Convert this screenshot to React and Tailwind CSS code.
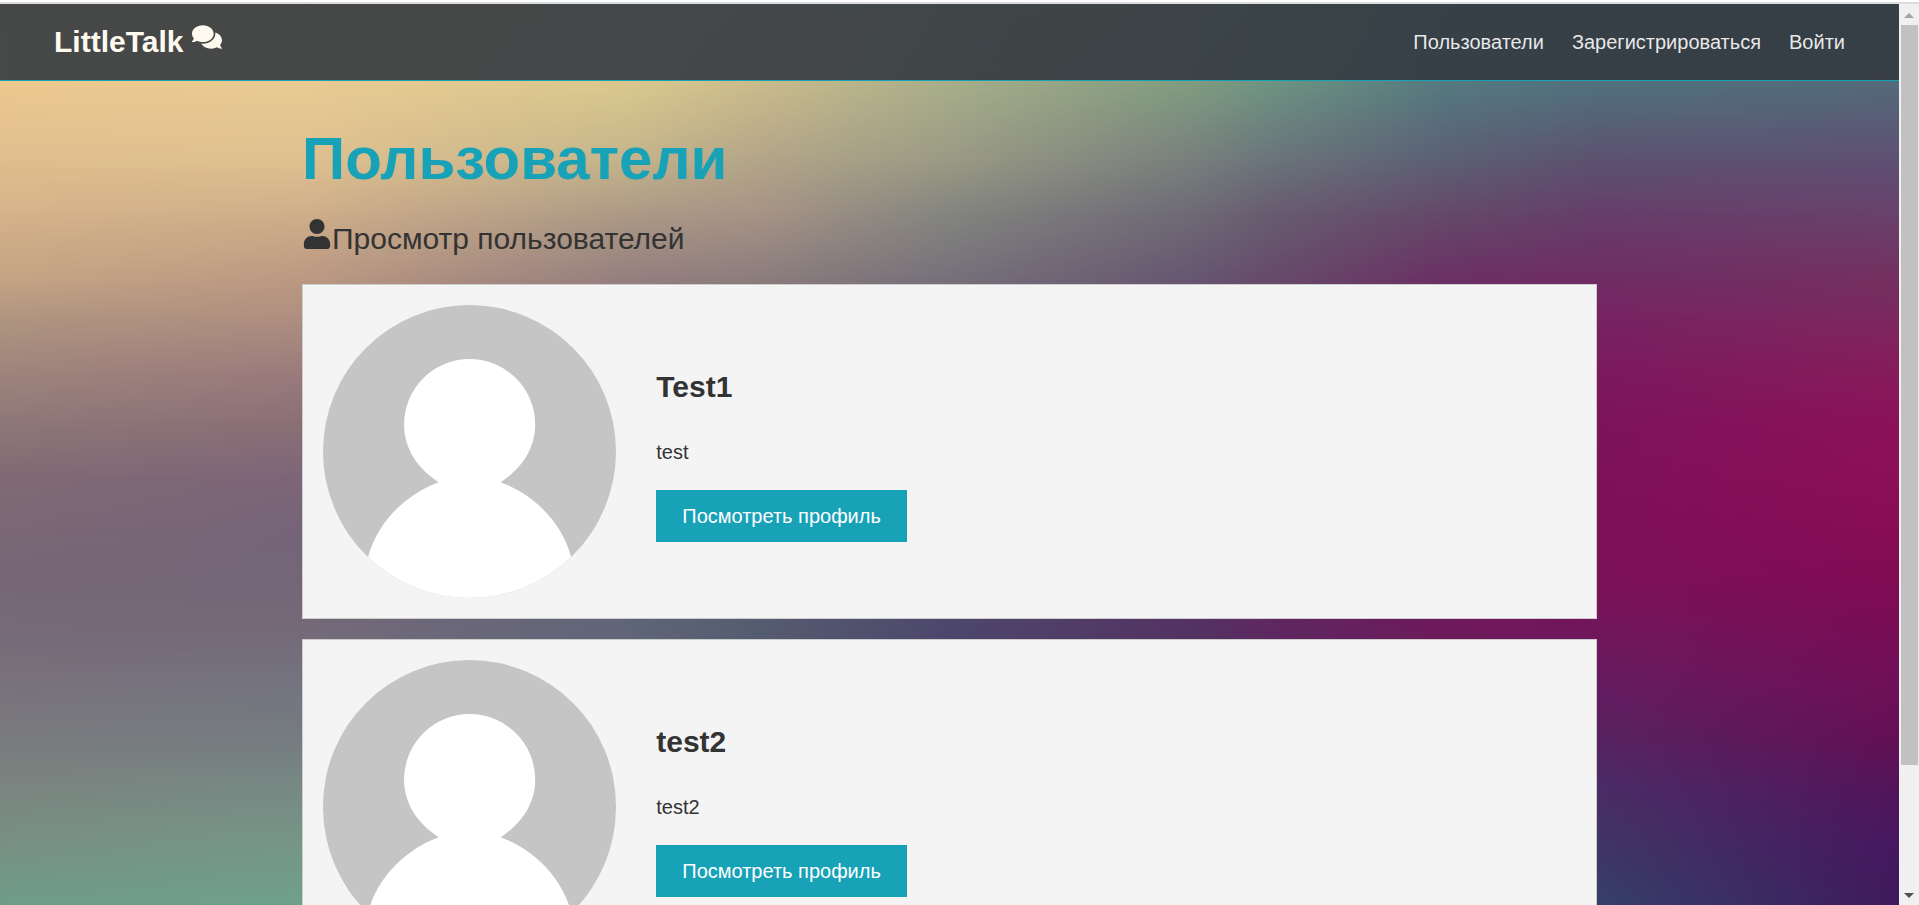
import { FaComments, FaUser } from "react-icons/fa";

const WIDE = [0, 16, 33, 40, 50, 63, 67, 76, 84, 100];
const EDGES = [0, 16, 84, 100];

const BACKDROP = [
  { y: 0, at: WIDE, colors: ["#edc98f", "#ecce94", "#e0cc90", "#d4c48e", "#b0b68c", "#84a484", "#749c86", "#588084", "#527882", "#527480"] },
  { y: 8.5, at: WIDE, colors: ["#edc98f", "#e9cb92", "#dac98e", "#cbbc8c", "#a8ae8a", "#7f9c80", "#6e9482", "#557a80", "#51727e", "#536b7a"] },
  { y: 17.3, at: WIDE, colors: ["#e0be8e", "#dfc090", "#c4b48b", "#b3a588", "#9a9a84", "#777f7c", "#6a747b", "#5c6074", "#5c5270", "#5e5073"] },
  { y: 23.1, at: WIDE, colors: ["#d6b38a", "#cfaf8a", "#ad9a86", "#a79486", "#84857f", "#6e6a76", "#685c70", "#644a6a", "#653f6a", "#69426c"] },
  { y: 30.7, at: WIDE, colors: ["#c4a384", "#bb9882", "#947e7e", "#8a7c7c", "#75707a", "#665570", "#664a6a", "#6b3064", "#702c64", "#743060"] },
  { y: 34.7, at: EDGES, colors: ["#b09680", "#af8f80", "#762462", "#7c285f"] },
  { y: 40.6, at: EDGES, colors: ["#9f857c", "#9c7c7c", "#7b1a5e", "#861c5b"] },
  { y: 46.5, at: EDGES, colors: ["#8e7878", "#8b6f76", "#7d145b", "#8b125a"] },
  { y: 52.3, at: EDGES, colors: ["#806b74", "#7d6678", "#7d1259", "#8d0f58"] },
  { y: 58.2, at: EDGES, colors: ["#7a6875", "#766479", "#7c1058", "#880c56"] },
  { y: 64, at: EDGES, colors: ["#766676", "#736678", "#7b1158", "#800c54"] },
  { y: 68, at: WIDE, colors: ["#766a78", "#756878", "#606578", "#565c70", "#4e486c", "#553263", "#602860", "#6f195c", "#74155a", "#7a0d55"] },
  { y: 71, at: WIDE, colors: ["#776c79", "#746c7b", "#5f6678", "#545c70", "#4c466c", "#533263", "#5c2860", "#6c1b5c", "#6e185c", "#760e56"] },
  { y: 75.6, at: EDGES, colors: ["#79727b", "#747480", "#651c60", "#6f1058"] },
  { y: 81.5, at: EDGES, colors: ["#7a7b7e", "#757c80", "#572360", "#641055"] },
  { y: 87.2, at: EDGES, colors: ["#7b8580", "#778a84", "#4a2c66", "#53155a"] },
  { y: 93.1, at: EDGES, colors: ["#789083", "#769688", "#403564", "#471860"] },
  { y: 100, at: EDGES, colors: ["#6e9d88", "#6fa08c", "#35406a", "#3f1a5c"] },
];

const USERS = [
  { name: "Test1", bio: "test" },
  { name: "test2", bio: "test2" },
];

const LINKS = ["Пользователи", "Зарегистрироваться", "Войти"];

function Backdrop() {
  return (
    <div aria-hidden="true" className="absolute inset-0 -z-10">
      {BACKDROP.map((row, i) => {
        const fade =
          i === 0
            ? "none"
            : `linear-gradient(to bottom, transparent ${BACKDROP[i - 1].y}%, black ${row.y}%)`;
        const stops = row.colors.map((c, k) => `${c} ${row.at[k]}%`).join(", ");
        return (
          <div
            key={row.y}
            className="absolute inset-0"
            style={{ backgroundImage: `linear-gradient(to right, ${stops})`, maskImage: fade }}
          />
        );
      })}
    </div>
  );
}

function Avatar() {
  return (
    <svg viewBox="0 0 293 293" className="block aspect-square w-full rounded-full" role="img" aria-label="Аватар">
      <rect width="293" height="293" fill="#c5c5c5" />
      <path
        fill="#fff"
        d="M115.500 177C95 164 81 144 81 119.500A65.500 65.500 0 0 1 212 119.500C212 144 198 164 177.500 177C212 190 239 218 248 252V293H45V252C54 218 81 190 115.500 177Z"
      />
    </svg>
  );
}

function ProfileCard({ user }) {
  return (
    <article className="grid grid-cols-[1fr_2fr_1fr] items-center gap-10 border border-[#ccc] bg-[#f4f4f4] p-5">
      <Avatar />
      <div className="flex flex-col items-start gap-5 pb-0.5">
        <h2 className="text-[30px] leading-[54px] font-bold">{user.name}</h2>
        <p className="leading-9">{user.bio}</p>
        <a href="#profile" className="bg-[#17a2b8] px-[26px] py-2 leading-9 text-white">
          Посмотреть профиль
        </a>
      </div>
    </article>
  );
}

function Scrollbar() {
  return (
    <div aria-hidden="true" className="flex w-5 shrink-0 flex-col items-center bg-[#f0f0f0]">
      <svg className="h-[21px] w-5 shrink-0" viewBox="0 0 20 21">
        <path d="M5 14L10 9L15 14Z" fill="#a3a3a3" />
      </svg>
      <div className="w-[17px] grow-[740] basis-0 bg-[#c1c1c1]" />
      <div className="grow-[119] basis-0" />
      <svg className="h-[21px] w-5 shrink-0" viewBox="0 0 20 21">
        <path d="M5 9L10 14L15 9Z" fill="#505050" />
      </svg>
    </div>
  );
}

export default function App() {
  return (
    <div className="flex h-screen flex-col bg-white pt-[2px] font-['Liberation_Sans',Arial,sans-serif] text-xl text-[#333]">
      <div className="h-[2px] shrink-0 bg-[#dadce0]" />
      <div className="flex min-h-0 grow">
        <div className="relative isolate min-w-0 grow overflow-hidden">
          <Backdrop />
          <nav className="flex items-center justify-between border-b border-[#17a2b8] bg-[#343a40]/90 bg-clip-padding px-10 py-[14px]">
            <a href="#home" className="flex items-center gap-[9px] px-[14px] text-[30px] leading-[48px] font-bold text-[#fffaf0]">
              LittleTalk
              <FaComments className="mb-[10px] size-[30px]" />
            </a>
            <ul className="flex leading-8 text-[#f4f4f4]/95">
              {LINKS.map((label) => (
                <li key={label}>
                  <a href="#page" className="px-[14px]">
                    {label}
                  </a>
                </li>
              ))}
            </ul>
          </nav>
          <main className="mx-auto w-full max-w-[1295px] pt-[42px]">
            <h1 className="mb-5 text-6xl leading-[72px] font-bold text-[#17a2b8]">Пользователи</h1>
            <p className="mb-[21px] flex text-[30px] leading-[48px]">
              <FaUser className="mt-1 h-[30px] w-[30px]" />
              Просмотр пользователей
            </p>
            <div className="flex flex-col gap-5">
              {USERS.map((user) => (
                <ProfileCard key={user.name} user={user} />
              ))}
            </div>
          </main>
        </div>
        <Scrollbar />
      </div>
    </div>
  );
}
